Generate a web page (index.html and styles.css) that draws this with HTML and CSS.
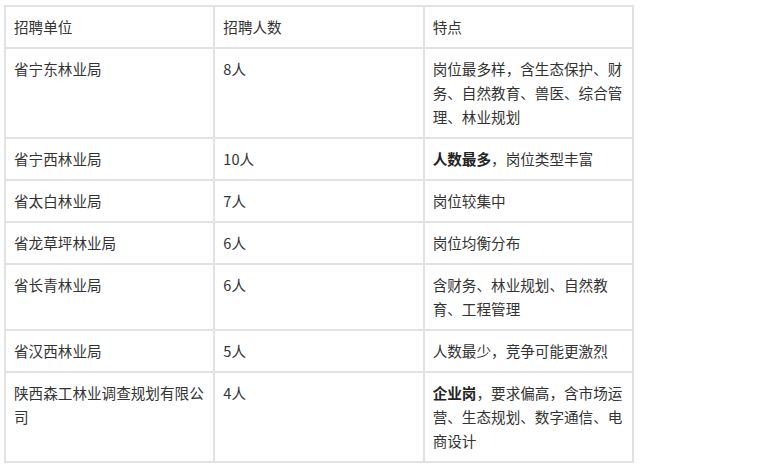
FILE: index.html
```html
<!DOCTYPE html>
<html lang="zh-CN">
<head>
<meta charset="utf-8">
<link rel="stylesheet" href="styles.css">
</head>
<body>
<table class="jobs">
  <thead>
    <tr><th>招聘单位</th><th>招聘人数</th><th>特点</th></tr>
  </thead>
  <tbody>
    <tr><td>省宁东林业局</td><td>8人</td><td>岗位最多样，含生态保护、财务、自然教育、兽医、综合管理、林业规划</td></tr>
    <tr><td>省宁西林业局</td><td>10人</td><td><strong>人数最多</strong>，岗位类型丰富</td></tr>
    <tr><td>省太白林业局</td><td>7人</td><td>岗位较集中</td></tr>
    <tr><td>省龙草坪林业局</td><td>6人</td><td>岗位均衡分布</td></tr>
    <tr><td>省长青林业局</td><td>6人</td><td>含财务、林业规划、自然教育、工程管理</td></tr>
    <tr><td>省汉西林业局</td><td>5人</td><td>人数最少，竞争可能更激烈</td></tr>
    <tr><td>陕西森工林业调查规划有限公司</td><td>4人</td><td><strong>企业岗</strong>，要求偏高，含市场运营、生态规划、数字通信、电商设计</td></tr>
  </tbody>
</table>
</body>
</html>
```
FILE: styles.css
```css
html, body {
  margin: 0;
  padding: 0;
  background: #ffffff;
}
body {
  padding: 5px 0 0 4px;
  font-family: "Noto Sans CJK SC", "Noto Sans", sans-serif;
  font-size: 14.6px;
  color: #333333;
}
.jobs {
  border-collapse: collapse;
  table-layout: fixed;
  width: 630px;
}
.jobs th,
.jobs td {
  border: 2px solid #e2e2e2;
  padding: 8px 8px;
  line-height: 24px;
  text-align: left;
  vertical-align: top;
  font-weight: 400;
}
.jobs strong {
  font-weight: 700;
  color: #222222;
}
```
